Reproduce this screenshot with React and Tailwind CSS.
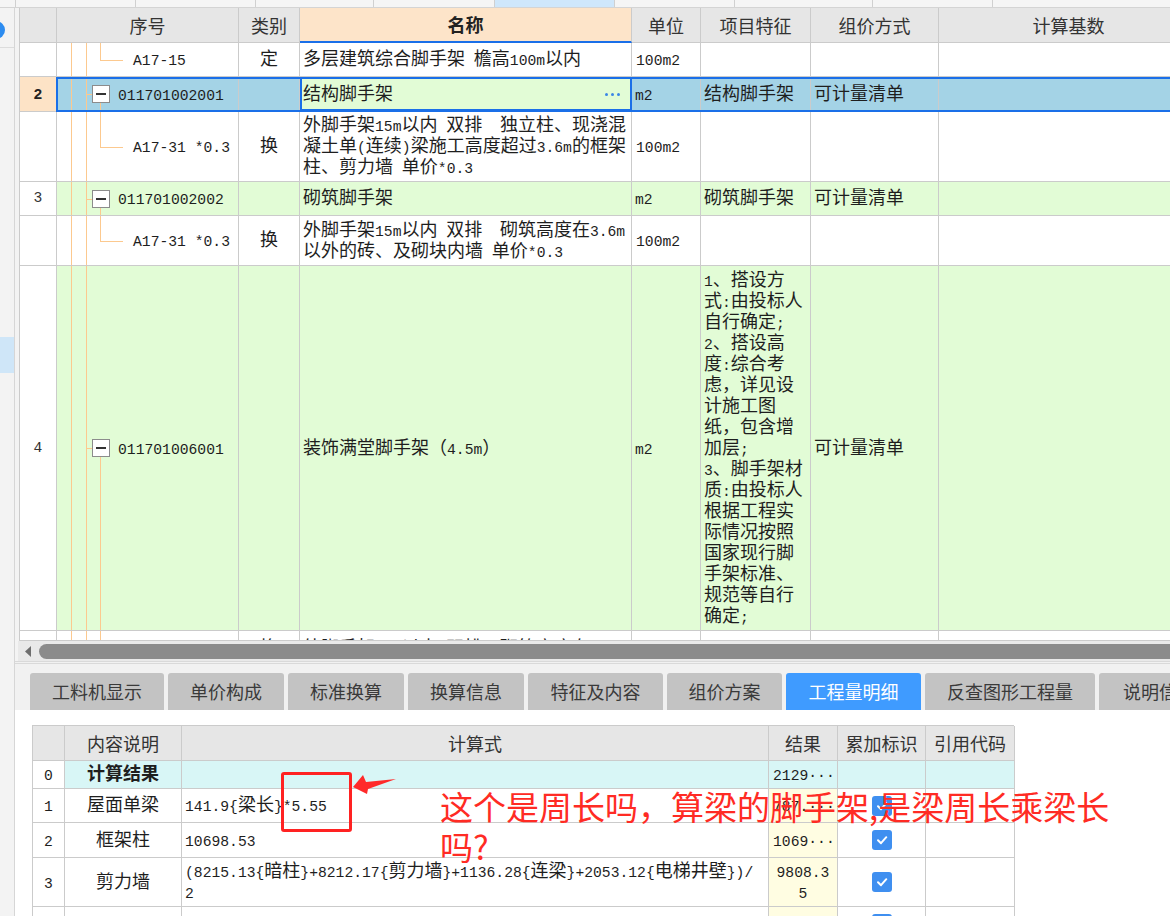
import React from "react";

const re = /([\u2E80-\u9FFF\u3000-\u303F\uFF00-\uFFEF]+)/;

function Mx({ t }) {
  const parts = t.split(re).filter((p) => p !== "");
  return parts.map((p, i) =>
    re.test(p) ? (
      <span key={i} className="font-['Noto_Sans_CJK_SC',sans-serif] text-[18px] leading-none">
        {p}
      </span>
    ) : (
      <span key={i} className="font-['Liberation_Mono',monospace] text-[14.7px] leading-none">
        {p}
      </span>
    )
  );
}

function Lines({ lines, className = "" }) {
  return (
    <div className={"pb-[4px] text-[18px] leading-[21px] text-[#1e1e1e] font-['Noto_Sans_CJK_SC',sans-serif] " + className}>
      {lines.map((l, i) => (
        <div key={i} className="whitespace-pre h-[21px]">
          <Mx t={l} />
        </div>
      ))}
    </div>
  );
}

const TT = "grid grid-cols-[37px_182px_61px_332px_69px_110px_128px_260px]";

function Tree({ kind, code, bg }) {
  return (
    <div
      className={
        "relative flex items-center border-r border-b border-[#cbcbcb] " +
        bg +
        (kind === "child" ? " pl-[76px]" : " pl-[61px]")
      }
    >
      <span className="absolute left-[14px] top-0 bottom-0 w-px bg-[#fcc98f]" />
      <span className="absolute left-[29px] top-0 bottom-0 w-px bg-[#fcc98f]" />
      {kind === "child" && (
        <>
          <span className="absolute left-[43px] top-0 h-1/2 w-px bg-[#fcc98f]" />
          <span className="absolute left-[43px] top-1/2 w-[23px] h-px bg-[#fcc98f]" />
        </>
      )}
      {kind === "through" && (
        <span className="absolute left-[43px] top-0 bottom-0 w-px bg-[#fcc98f]" />
      )}
      {kind === "parent" && (
        <>
          <span className="absolute left-[29px] top-1/2 w-[6px] h-px bg-[#fcc98f]" />
          <span className="absolute left-[43px] top-1/2 bottom-0 w-px bg-[#fcc98f]" />
          <span className="absolute left-[35px] top-1/2 -translate-y-1/2 w-[18px] h-[18px] border border-[#8c8c8c] bg-white flex items-center justify-center">
            <span className="w-[10px] h-[2px] bg-[#333]" />
          </span>
        </>
      )}
      {code && (
        <div className="relative">
          <Lines lines={[code]} />
        </div>
      )}
    </div>
  );
}

function Cell({ bg = "bg-white", className = "", children }) {
  return (
    <div className={"border-r border-b border-[#cbcbcb] flex items-center " + bg + " " + className}>
      {children}
    </div>
  );
}

function Check() {
  return (
    <span className="w-[20px] h-[20px] rounded-[3px] bg-[#3f8ff0] flex items-center justify-center">
      <svg width="14" height="14" viewBox="0 0 14 14">
        <path
          d="M3 7.3 L6 10.2 L11.3 4.2"
          stroke="white"
          strokeWidth="2"
          fill="none"
          strokeLinecap="round"
          strokeLinejoin="round"
        />
      </svg>
    </span>
  );
}

const feature = [
  "1、搭设方",
  "式:由投标人",
  "自行确定;",
  "2、搭设高",
  "度:综合考",
  "虑，详见设",
  "计施工图",
  "纸，包含增",
  "加层;",
  "3、脚手架材",
  "质:由投标人",
  "根据工程实",
  "际情况按照",
  "国家现行脚",
  "手架标准、",
  "规范等自行",
  "确定;",
];

const GREEN = "bg-[#e2fcd6]";
const BLUE = "bg-[#a4d3e6]";

function TopTable() {
  return (
    <div className="border-l border-[#cbcbcb] w-[1179px]">
      {/* header */}
      <div className={TT + " h-[35px] text-[18px] text-[#333] font-['Noto_Sans_CJK_SC',sans-serif]"}>
        <Cell bg="bg-[#e6e6e6]" />
        <Cell bg="bg-[#e6e6e6]" className="justify-center">序号</Cell>
        <Cell bg="bg-[#e6e6e6]" className="justify-center">类别</Cell>
        <div className="border-r border-[#cbcbcb] border-b-2 border-b-[#1a6fe8] bg-[#fde4c9] flex items-center justify-center font-bold text-[#222]">
          名称
        </div>
        <Cell bg="bg-[#e6e6e6]" className="justify-center">单位</Cell>
        <Cell bg="bg-[#e6e6e6]" className="justify-center">项目特征</Cell>
        <Cell bg="bg-[#e6e6e6]" className="justify-center">组价方式</Cell>
        <Cell bg="bg-[#e6e6e6]" className="justify-center">计算基数</Cell>
      </div>

      {/* A17-15 */}
      <div className={TT + " h-[34px]"}>
        <Cell />
        <Tree kind="child" code="A17-15" bg="bg-white" />
        <Cell className="justify-center"><Lines lines={["定"]} /></Cell>
        <Cell className="pl-[3px]"><Lines lines={["多层建筑综合脚手架 檐高100m以内"]} /></Cell>
        <Cell className="pl-[4px]"><Lines lines={["100m2"]} /></Cell>
        <Cell />
        <Cell />
        <Cell />
      </div>

      {/* row 2 selected */}
      <div className={TT + " h-[35px] relative"}>
        <Cell bg="bg-[#fde3c6]" className="justify-center">
          <span className="font-['Liberation_Sans',sans-serif] font-bold text-[15px] text-[#222]">2</span>
        </Cell>
        <Tree kind="parent" code="011701002001" bg={BLUE} />
        <Cell bg={BLUE} />
        <div className={"relative border-r border-b border-[#cbcbcb] flex items-center pl-[3px] " + GREEN}>
          <Lines lines={["结构脚手架"]} />
          <span className="ml-auto mr-[11px] flex gap-[3px]">
            <span className="w-[3px] h-[3px] rounded-full bg-[#3a86e6]" />
            <span className="w-[3px] h-[3px] rounded-full bg-[#3a86e6]" />
            <span className="w-[3px] h-[3px] rounded-full bg-[#3a86e6]" />
          </span>
          <span className="absolute left-0 top-0 bottom-0 right-[-1px] border-2 border-[#1a6fe8] pointer-events-none" />
        </div>
        <Cell bg={BLUE} className="pl-[3px]"><Lines lines={["m2"]} /></Cell>
        <Cell bg={BLUE} className="pl-[3px]"><Lines lines={["结构脚手架"]} /></Cell>
        <Cell bg={BLUE} className="pl-[3px]"><Lines lines={["可计量清单"]} /></Cell>
        <Cell bg={BLUE} />
        <span className="absolute left-[36px] right-0 top-0 bottom-0 border-2 border-[#1a6fe8] pointer-events-none" />
      </div>

      {/* child of 2 */}
      <div className={TT + " h-[70px]"}>
        <Cell />
        <Tree kind="child" code="A17-31 *0.3" bg="bg-white" />
        <Cell className="justify-center"><Lines lines={["换"]} /></Cell>
        <Cell className="pl-[3px]">
          <Lines
            lines={[
              "外脚手架15m以内 双排  独立柱、现浇混",
              "凝土单(连续)梁施工高度超过3.6m的框架",
              "柱、剪力墙 单价*0.3",
            ]}
          />
        </Cell>
        <Cell className="pl-[4px]"><Lines lines={["100m2"]} /></Cell>
        <Cell />
        <Cell />
        <Cell />
      </div>

      {/* row 3 */}
      <div className={TT + " h-[34px]"}>
        <Cell className="justify-center">
          <span className="font-['Liberation_Mono',monospace] text-[14.7px] text-[#333]">3</span>
        </Cell>
        <Tree kind="parent" code="011701002002" bg={GREEN} />
        <Cell bg={GREEN} />
        <Cell bg={GREEN} className="pl-[3px]"><Lines lines={["砌筑脚手架"]} /></Cell>
        <Cell bg={GREEN} className="pl-[3px]"><Lines lines={["m2"]} /></Cell>
        <Cell bg={GREEN} className="pl-[3px]"><Lines lines={["砌筑脚手架"]} /></Cell>
        <Cell bg={GREEN} className="pl-[3px]"><Lines lines={["可计量清单"]} /></Cell>
        <Cell bg={GREEN} />
      </div>

      {/* child of 3 */}
      <div className={TT + " h-[50px]"}>
        <Cell />
        <Tree kind="child" code="A17-31 *0.3" bg="bg-white" />
        <Cell className="justify-center"><Lines lines={["换"]} /></Cell>
        <Cell className="pl-[3px]">
          <Lines
            lines={["外脚手架15m以内 双排  砌筑高度在3.6m", "以外的砖、及砌块内墙 单价*0.3"]}
          />
        </Cell>
        <Cell className="pl-[4px]"><Lines lines={["100m2"]} /></Cell>
        <Cell />
        <Cell />
        <Cell />
      </div>

      {/* row 4 */}
      <div className={TT + " h-[365px]"}>
        <Cell className="justify-center">
          <span className="font-['Liberation_Mono',monospace] text-[14.7px] text-[#333]">4</span>
        </Cell>
        <Tree kind="parent" code="011701006001" bg={GREEN} />
        <Cell bg={GREEN} />
        <Cell bg={GREEN} className="pl-[3px]"><Lines lines={["装饰满堂脚手架（4.5m）"]} /></Cell>
        <Cell bg={GREEN} className="pl-[3px]"><Lines lines={["m2"]} /></Cell>
        <Cell bg={GREEN} className="pl-[3px]"><Lines lines={feature} /></Cell>
        <Cell bg={GREEN} className="pl-[3px]"><Lines lines={["可计量清单"]} /></Cell>
        <Cell bg={GREEN} />
      </div>

      {/* partial row */}
      <div className={TT + " h-[10px] overflow-hidden"}>
        <Cell />
        <Tree kind="through" bg="bg-white" />
        <div className="border-r border-b border-[#cbcbcb] bg-white overflow-hidden flex justify-center pt-[5px]">
          <Lines lines={["换"]} />
        </div>
        <div className="border-r border-b border-[#cbcbcb] bg-white overflow-hidden pl-[3px] pt-[5px]">
          <Lines lines={["外脚手架15m以内 双排  砌筑高度在3.6m"]} />
        </div>
        <Cell />
        <Cell />
        <Cell />
        <Cell />
      </div>
    </div>
  );
}

const BT = "grid grid-cols-[32px_117px_587px_69px_88px_89px]";
const YEL = "bg-[#fffde2]";
const CYAN = "bg-[#d8f6f6]";

function BottomTable() {
  return (
    <div className="border-l border-t border-[#cbcbcb] w-[982px]">
      <div className={BT + " h-[35px] text-[18px] text-[#333] font-['Noto_Sans_CJK_SC',sans-serif]"}>
        <Cell bg="bg-[#e6e6e6]" />
        <Cell bg="bg-[#e6e6e6]" className="justify-center">内容说明</Cell>
        <Cell bg="bg-[#e6e6e6]" className="justify-center">计算式</Cell>
        <Cell bg="bg-[#e6e6e6]" className="justify-center">结果</Cell>
        <Cell bg="bg-[#e6e6e6]" className="justify-center">累加标识</Cell>
        <Cell bg="bg-[#e6e6e6]" className="justify-center">引用代码</Cell>
      </div>
      <div className={BT + " h-[28px]"}>
        <Cell className="justify-center"><Lines lines={["0"]} /></Cell>
        <Cell bg={CYAN} className="justify-center"><Lines lines={["计算结果"]} className="font-bold" /></Cell>
        <Cell bg={CYAN} />
        <Cell bg={CYAN} className="pl-[4px]"><Lines lines={["2129···"]} /></Cell>
        <Cell bg={CYAN} />
        <Cell bg={CYAN} />
      </div>
      <div className={BT + " h-[34px]"}>
        <Cell className="justify-center"><Lines lines={["1"]} /></Cell>
        <Cell className="justify-center"><Lines lines={["屋面单梁"]} /></Cell>
        <Cell className="pl-[3px]"><Lines lines={["141.9{梁长}*5.55"]} /></Cell>
        <Cell bg={YEL} className="pl-[4px]"><Lines lines={["787.···"]} /></Cell>
        <Cell className="justify-center"><Check /></Cell>
        <Cell />
      </div>
      <div className={BT + " h-[35px]"}>
        <Cell className="justify-center"><Lines lines={["2"]} /></Cell>
        <Cell className="justify-center"><Lines lines={["框架柱"]} /></Cell>
        <Cell className="pl-[3px]"><Lines lines={["10698.53"]} /></Cell>
        <Cell bg={YEL} className="pl-[4px]"><Lines lines={["1069···"]} /></Cell>
        <Cell className="justify-center"><Check /></Cell>
        <Cell />
      </div>
      <div className={BT + " h-[49px]"}>
        <Cell className="justify-center"><Lines lines={["3"]} /></Cell>
        <Cell className="justify-center"><Lines lines={["剪力墙"]} /></Cell>
        <Cell className="pl-[3px]">
          <Lines lines={["(8215.13{暗柱}+8212.17{剪力墙}+1136.28{连梁}+2053.12{电梯井壁})/", "2"]} />
        </Cell>
        <Cell bg={YEL} className="justify-center"><Lines lines={["9808.3", "5"]} className="text-center" /></Cell>
        <Cell className="justify-center"><Check /></Cell>
        <Cell />
      </div>
      <div className={BT + " h-[35px]"}>
        <Cell />
        <Cell />
        <Cell />
        <Cell bg={YEL} />
        <Cell className="justify-center"><Check /></Cell>
        <Cell />
      </div>
    </div>
  );
}

const tabs = [
  ["工料机显示", "w-[134px]"],
  ["单价构成", "w-[116px]"],
  ["标准换算", "w-[116px]"],
  ["换算信息", "w-[116px]"],
  ["特征及内容", "w-[135px]"],
  ["组价方案", "w-[115px]"],
  ["工程量明细", "w-[135px]"],
  ["反查图形工程量", "w-[170px]"],
  ["说明信息", "w-[120px]"],
];

export default function App() {
  return (
    <div className="relative w-[1170px] h-[916px] overflow-hidden bg-white font-['Noto_Sans_CJK_SC',sans-serif]">
      {/* top strip */}
      <div className="flex h-[8px] bg-[#f5f5f5] border-b border-[#d4d4d4]">
        <div className="w-[16px] border-r border-[#d0d0d0]" />
        <div className="w-[120px] border-r border-[#d0d0d0]" />
        <div className="w-[120px] border-r border-[#d0d0d0]" />
        <div className="w-[118px] border-r border-[#d0d0d0]" />
        <div className="w-[121px] border-r border-[#d0d0d0]" />
        <div className="w-[120px] border-r border-[#d0d0d0] bg-[#cfe7fb]" />
        <div className="w-[120px] border-r border-[#d0d0d0]" />
        <div className="w-[138px] border-r border-[#d0d0d0]" />
        <div className="w-[120px] border-r border-[#d0d0d0]" />
        <div className="flex-1" />
      </div>

      <div className="flex h-[908px]">
        {/* left panel */}
        <div className="relative w-[15px] shrink-0 bg-[#f3f3f3] border-r border-[#d6d6d6] overflow-hidden">
          <div className="absolute left-[-13px] top-[13px] w-[18px] h-[18px] rounded-full bg-[#2d8cf0]" />
          <div className="h-[40px] border-b border-[#dcdcdc]" />
          <div className="mt-[289px] h-[36px] bg-[#cfe6f8]" />
        </div>

        {/* main */}
        <div className="flex-1 flex flex-col min-w-0">
          <div className="h-[633px] bg-[#f3f3f3] pl-[4px] overflow-hidden">
            <TopTable />
          </div>

          {/* scrollbar */}
          <div className="h-[20px] bg-[#f3f3f3] pl-[3px]">
            <div className="h-full bg-[#e9e9e9] flex items-center">
              <div className="w-[21px] flex justify-center">
                <svg width="7" height="11" viewBox="0 0 7 11">
                  <polygon points="6,0 6,11 0,5.5" fill="#6e6e6e" />
                </svg>
              </div>
              <div className="flex-1 h-[15px] rounded-l-full bg-[#8b8b8b]" />
            </div>
          </div>

          {/* tabs */}
          <div className="h-[49px] bg-[#f1f1f1] border-t-[3px] border-double border-[#d9d9d9] flex items-end gap-[4px] pl-[15px]">
            {tabs.map(([t, w], i) => (
              <div
                key={t}
                className={
                  w +
                  " shrink-0 h-[37px] rounded-t-[3px] flex items-center justify-center text-[18px] whitespace-nowrap overflow-hidden " +
                  (i === 6 ? "bg-[#3f9bff] text-white" : "bg-[#c3c3c3] text-[#3a3a3a]")
                }
              >
                {t}
              </div>
            ))}
          </div>

          {/* bottom */}
          <div className="flex-1 bg-white pl-[17px] pt-[15px] overflow-hidden">
            <BottomTable />
          </div>
        </div>
      </div>

      {/* annotation */}
      <div className="absolute left-[281px] top-[772px] w-[71px] h-[60px] border-[3px] border-[#ff2222] rounded-[3px]" />
      <svg className="absolute left-[350px] top-[770px]" width="50" height="30" viewBox="350 770 50 30">
        <polygon points="353,787 363,775 366,782 396,779 368,789 367,794" fill="#ff2a2a" />
      </svg>
      <div className="absolute left-[440px] top-[786px] text-[33px] leading-[40px] text-[#ff2b24] whitespace-nowrap font-['Noto_Sans_CJK_SC',sans-serif]">
        这个是周长吗，算梁的脚手架,是梁周长乘梁长
        <br />
        吗?
      </div>
    </div>
  );
}
